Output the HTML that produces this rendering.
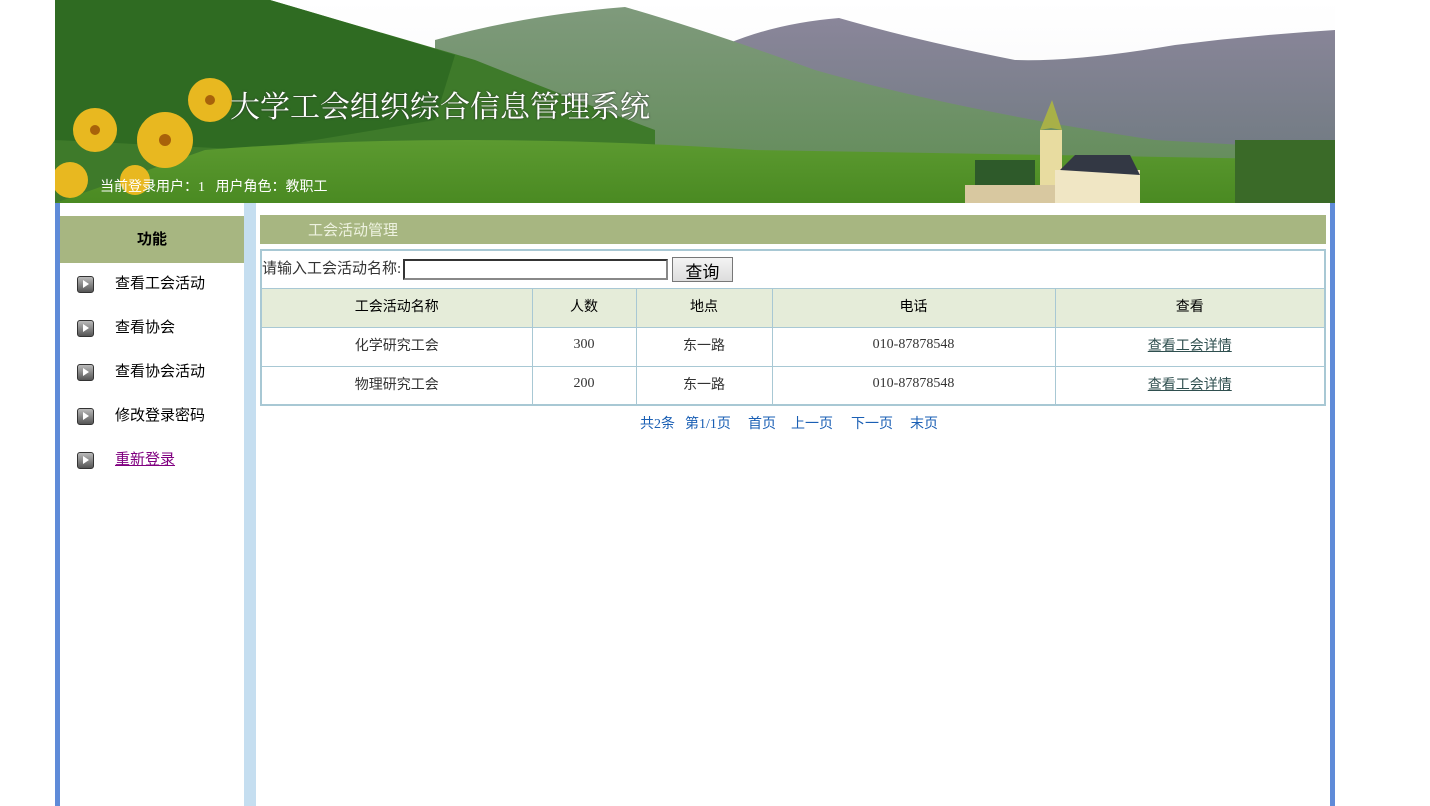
<!DOCTYPE html>
<html><head><meta charset="utf-8">
<style>
*{margin:0;padding:0;box-sizing:border-box}
body{width:1430px;height:806px;background:#fff;font-family:"Liberation Serif","Noto Sans CJK SC",serif;font-size:14px;position:relative;overflow:hidden}
#hd{position:absolute;left:55px;top:0;width:1280px;height:203px;overflow:hidden}
#title{position:absolute;left:175px;top:82px;color:#fff;font-size:30px;font-family:"Liberation Serif","Noto Serif CJK SC",serif;text-shadow:0 0 2px #333}
#user{position:absolute;left:45px;top:176px;color:#fff;font-size:14px}
.lb{position:absolute;left:55px;top:203px;width:5px;height:603px;background:#5f8bd8}
.rb{position:absolute;left:1330px;top:203px;width:5px;height:603px;background:#5f8bd8}
.strip{position:absolute;left:244px;top:203px;width:12px;height:603px;background:#c5def0}
#side{position:absolute;left:60px;top:216px;width:184px}
#side .h{height:47px;background:#a7b681;text-align:center;line-height:47px;font-weight:bold;font-size:15px;font-family:"Liberation Sans","Noto Sans CJK SC",sans-serif}
#side .it{height:44px;line-height:42px;padding-left:55px;position:relative;font-size:15px;font-family:"Liberation Sans","Noto Sans CJK SC",sans-serif}
#side .it i{position:absolute;left:17px;top:13px;width:17px;height:17px;border-radius:3px;background:linear-gradient(#bbb,#555);border:1px solid #333}
#side .it i:after{content:"";position:absolute;left:5px;top:3px;border-left:6px solid #fff;border-top:4.5px solid transparent;border-bottom:4.5px solid transparent}
#side a{color:#800080}
#bar{position:absolute;left:260px;top:215px;width:1066px;height:29px;background:#a7b681;color:#eef2e0;font-size:15px;line-height:32px;padding-left:48px;font-family:"Liberation Sans","Noto Sans CJK SC",sans-serif}
table{position:absolute;left:260px;top:249px;width:1066px;border-collapse:collapse;border:2px solid #a8c8d4}
td{border:1px solid #a8c8d4;text-align:center;height:39px;color:#333;font-size:14px;padding-bottom:3px}
tr.s td{height:38px;text-align:left;border-left:none;border-right:none;font-size:15px;padding:0}
tr.th td{background:#e5ecd9;color:#000;font-family:"Liberation Sans","Noto Sans CJK SC",sans-serif}
td a{color:#2f4f4f}
input.t{width:265px;height:21px;border:2px inset #888;vertical-align:middle;margin-left:2px}
button{width:61px;height:25px;font-size:17px;border:1px solid #777;background:linear-gradient(#f4f4f4,#ddd);vertical-align:middle;font-family:"Liberation Sans","Noto Sans CJK SC",sans-serif}
#pg span{position:absolute;top:413px;color:#1a5fb4;font-size:14px}
</style></head><body>
<div id="hd">
<svg width="1280" height="203" viewBox="0 0 1280 203">
<defs>
<linearGradient id="sky" x1="0" y1="0" x2="0" y2="1"><stop offset="0" stop-color="#fff"/><stop offset="1" stop-color="#f4f4f6"/></linearGradient>
<linearGradient id="pm" x1="0" y1="0" x2="0" y2="1"><stop offset="0" stop-color="#8a869a"/><stop offset="1" stop-color="#6f7a80"/></linearGradient>
<linearGradient id="gm" x1="0" y1="0" x2="0" y2="1"><stop offset="0" stop-color="#7f9a7c"/><stop offset="1" stop-color="#5f8a55"/></linearGradient>
<linearGradient id="mead" x1="0" y1="0" x2="0" y2="1"><stop offset="0" stop-color="#5c9a30"/><stop offset="1" stop-color="#4a8a22"/></linearGradient>
</defs>
<rect width="1280" height="203" fill="url(#sky)"/>
<path d="M640 60 Q700 25 784 18 Q860 40 960 60 Q1020 62 1120 45 Q1200 35 1280 30 L1280 170 L640 170Z" fill="url(#pm)"/>
<path d="M380 40 Q470 15 570 7 Q650 30 760 70 Q900 110 1100 140 L1280 150 L1280 203 L380 203Z" fill="url(#gm)"/>
<path d="M0 0 L215 0 Q300 25 420 60 Q520 100 600 130 L600 203 L0 203Z" fill="#3e7a2a"/>
<path d="M0 0 L215 0 Q300 25 400 55 L380 120 L200 150 L0 140Z" fill="#2f6b22"/>
<path d="M150 150 Q400 130 700 150 Q1000 155 1280 160 L1280 203 L0 203Z" fill="url(#mead)"/>
<rect x="1180" y="140" width="100" height="63" fill="#3a6a28"/>
<rect x="920" y="160" width="60" height="43" fill="#2e5a2a"/>
<rect x="985" y="130" width="22" height="60" fill="#e8dca0"/>
<path d="M985 130 L996 128 L1007 130 L997 100Z" fill="#a8b048"/>
<rect x="1000" y="170" width="85" height="33" fill="#f0e6c4"/>
<path d="M1005 170 L1020 155 L1075 155 L1085 175Z" fill="#333844"/>
<rect x="910" y="185" width="90" height="18" fill="#d8c8a0"/>
<g fill="#e8b820"><circle cx="40" cy="130" r="22"/><circle cx="110" cy="140" r="28"/><circle cx="155" cy="100" r="22"/><circle cx="15" cy="180" r="18"/><circle cx="80" cy="180" r="15"/></g>
<g fill="#a8620a"><circle cx="40" cy="130" r="5"/><circle cx="110" cy="140" r="6"/><circle cx="155" cy="100" r="5"/></g>
</svg>
<div id="title">大学工会组织综合信息管理系统</div>
<div id="user">当前登录用户：1&nbsp;&nbsp; 用户角色：教职工</div>
</div>
<div class="lb"></div><div class="rb"></div><div class="strip"></div>
<div id="side">
<div class="h">功能</div>
<div class="it"><i></i>查看工会活动</div>
<div class="it"><i></i>查看协会</div>
<div class="it"><i></i>查看协会活动</div>
<div class="it"><i></i>修改登录密码</div>
<div class="it"><i></i><a href="#">重新登录</a></div>
</div>
<div id="bar">工会活动管理</div>
<table>
<tr class="s"><td colspan="5">请输入工会活动名称:<input class="t"> <button>查询</button></td></tr>
<tr class="th"><td style="width:271px">工会活动名称</td><td style="width:104px">人数</td><td style="width:136px">地点</td><td style="width:283px">电话</td><td>查看</td></tr>
<tr><td>化学研究工会</td><td>300</td><td>东一路</td><td>010-87878548</td><td><a href="#">查看工会详情</a></td></tr>
<tr><td>物理研究工会</td><td>200</td><td>东一路</td><td>010-87878548</td><td><a href="#">查看工会详情</a></td></tr>
</table>
<div id="pg"><span style="left:640px">共2条</span><span style="left:685px">第1/1页</span><span style="left:748px">首页</span><span style="left:791px">上一页</span><span style="left:851px">下一页</span><span style="left:910px">末页</span></div>
</body></html>
